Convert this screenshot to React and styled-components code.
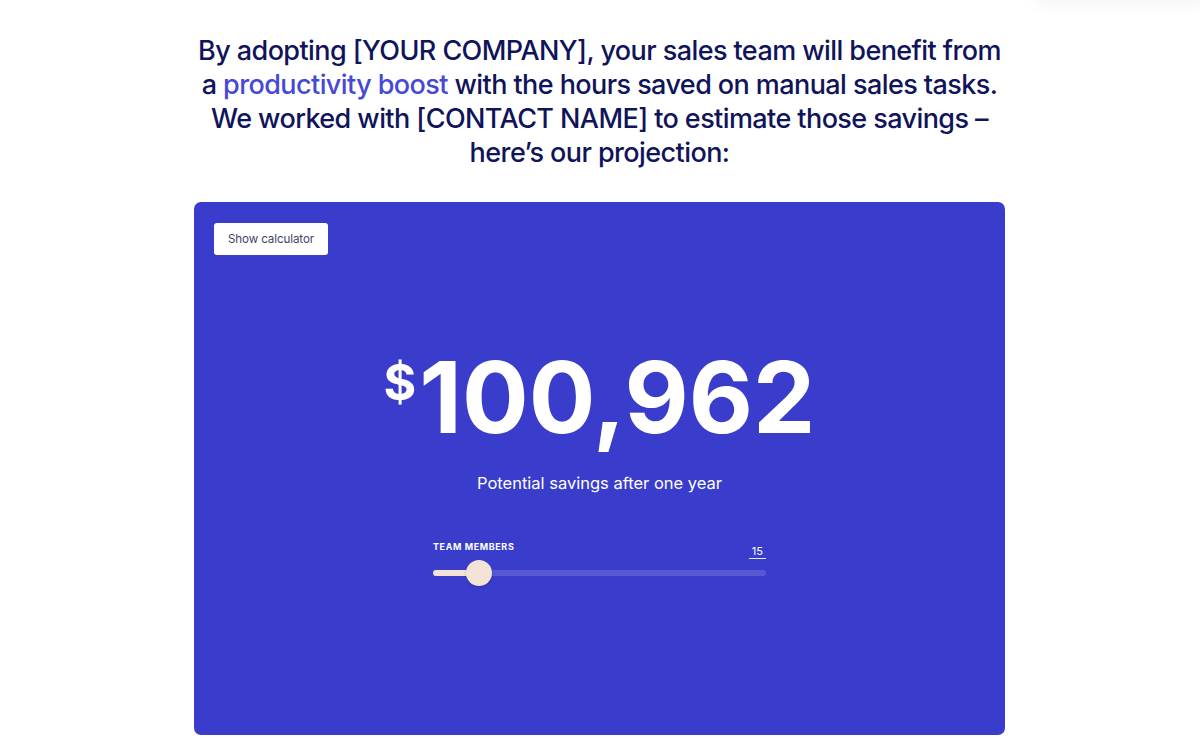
import React from "react";
import styled, { createGlobalStyle } from "styled-components";

const Global = createGlobalStyle`
  html, body { margin: 0; padding: 0; background: #ffffff; }
  body { font-family: Inter, "Noto Sans", sans-serif; -webkit-font-smoothing: antialiased; }
`;

const Page = styled.main`
  width: 1199px;
  padding-right: 1px;
  display: flex;
  flex-direction: column;
  align-items: center;
  padding-top: 34px;
`;

const Heading = styled.h1`
  margin: 0;
  width: 900px;
  text-align: center;
  font-family: Inter, sans-serif;
  font-weight: 500;
  font-size: 27px;
  line-height: 34px;
  letter-spacing: -0.58px;
  color: #10145a;
`;

const Accent = styled.span`
  color: #4649d6;
`;

const Card = styled.section`
  margin-top: 32px;
  width: 811px;
  height: 533px;
  box-sizing: border-box;
  background: #3a3dcc;
  border-radius: 7px;
  padding: 21px 20px 20px;
  display: flex;
  flex-direction: column;
`;

const Button = styled.button`
  align-self: flex-start;
  width: 114px;
  height: 32px;
  padding: 0;
  background: #ffffff;
  border: none;
  border-radius: 3px;
  font-family: Inter, sans-serif;
  font-size: 11.6px;
  letter-spacing: -0.1px;
  color: #3f4264;
  cursor: pointer;
`;

const Amount = styled.div`
  margin-top: 93px;
  display: flex;
  justify-content: center;
  align-items: flex-start;
  color: #ffffff;
  font-family: Inter, sans-serif;
  font-weight: 700;
`;

const Currency = styled.span`
  font-size: 50px;
  line-height: 50px;
  margin-top: 9px;
  margin-right: 3px;
`;

const Number = styled.span`
  font-size: 99px;
  line-height: 99px;
  letter-spacing: 0;
`;

const Caption = styled.p`
  margin: 24px 0 0;
  text-align: center;
  color: #ffffff;
  font-family: Inter, sans-serif;
  font-size: 16.5px;
  line-height: 24px;
`;

const SliderBlock = styled.div`
  align-self: center;
  width: 333px;
  margin-top: 46px;
  display: flex;
  flex-direction: column;
`;

const SliderHead = styled.div`
  display: flex;
  justify-content: space-between;
  align-items: flex-end;
`;

const Label = styled.span`
  font-family: Inter, sans-serif;
  font-size: 9px;
  line-height: 12px;
  font-weight: 700;
  letter-spacing: 0.6px;
  color: #ffffff;
  text-transform: uppercase;
  margin-bottom: 5.5px;
`;

const Value = styled.span`
  font-family: Inter, sans-serif;
  font-size: 11px;
  line-height: 14px;
  color: #ffffff;
  padding: 0 3px;
  border-bottom: 1.5px solid #e9e6f2;
`;

const Track = styled.div`
  position: relative;
  margin-top: 11.5px;
  height: 6px;
  border-radius: 3px;
  background: rgba(255, 255, 255, 0.15);
`;

const Fill = styled.div`
  height: 100%;
  border-radius: 3px;
  background: #f3e3d6;
`;

const Thumb = styled.div`
  position: absolute;
  top: 50%;
  width: 26px;
  height: 26px;
  border-radius: 50%;
  background: #f3e3d6;
  transform: translate(-50%, -50%);
  box-shadow: 0 1px 3px rgba(0, 0, 0, 0.2);
`;

const CornerShadow = styled.div`
  position: fixed;
  top: -40px;
  right: -10px;
  width: 180px;
  height: 40px;
  border-radius: 20px;
  box-shadow: 0 4px 18px rgba(0, 0, 0, 0.05);
`;

export default function App() {
  const pct = 46 / 333;
  return (
    <>
      <Global />
      <CornerShadow />
      <Page>
        <Heading>
          By adopting [YOUR COMPANY], your sales team will benefit from
          <br />a <Accent>productivity boost</Accent> with the hours saved on manual sales tasks.
          <br />We worked with [CONTACT NAME] to estimate those savings –
          <br />here’s our projection:
        </Heading>
        <Card>
          <Button>Show calculator</Button>
          <Amount>
            <Currency>$</Currency>
            <Number>100,962</Number>
          </Amount>
          <Caption>Potential savings after one year</Caption>
          <SliderBlock>
            <SliderHead>
              <Label>Team members</Label>
              <Value>15</Value>
            </SliderHead>
            <Track>
              <Fill style={{ width: `${pct * 100}%` }} />
              <Thumb style={{ left: `${pct * 100}%` }} />
            </Track>
          </SliderBlock>
        </Card>
      </Page>
    </>
  );
}
